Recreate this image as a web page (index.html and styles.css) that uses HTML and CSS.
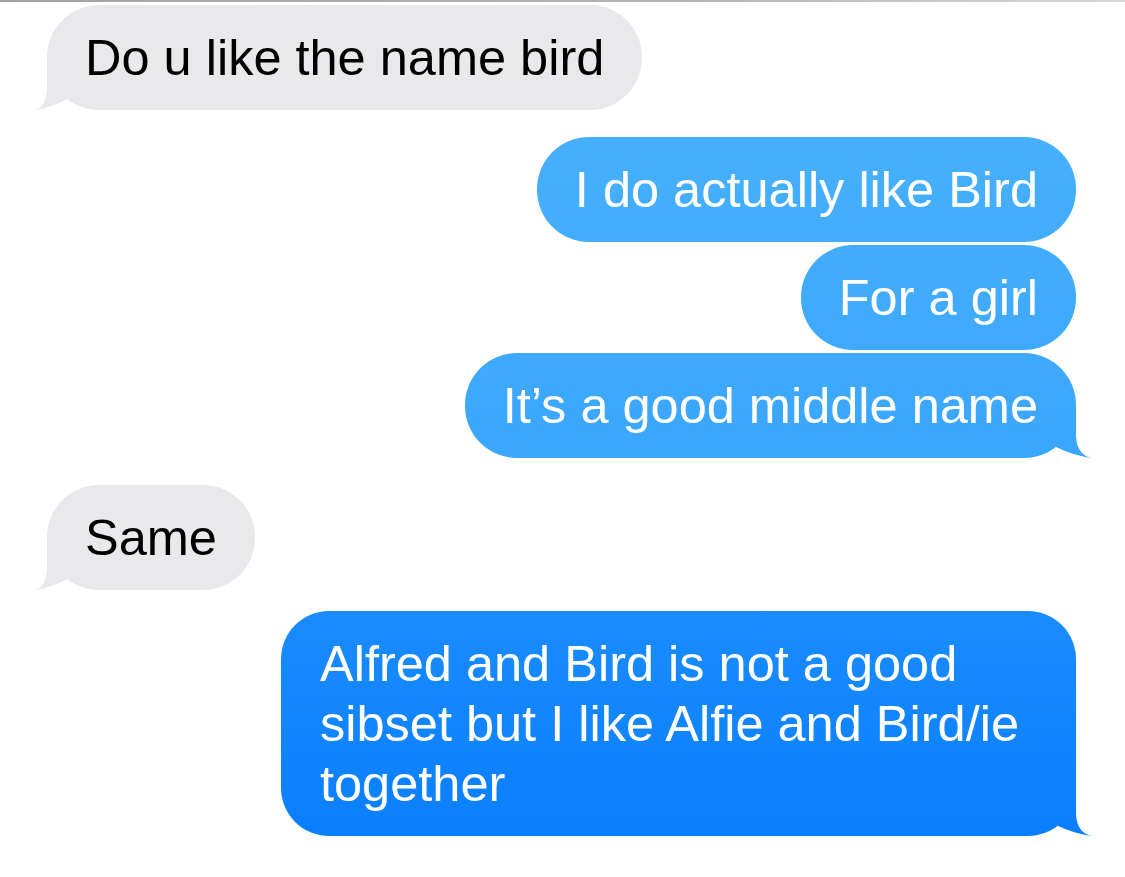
FILE: index.html
```html
<!DOCTYPE html>
<html lang="en">
<head>
  <meta charset="UTF-8">
  <meta name="viewport" content="width=device-width, initial-scale=1.0">
  <title>Messages</title>
  <link rel="stylesheet" href="styles.css">
</head>
<body>

  <div class="top-rule"></div>

  <div class="thread">
    <div class="group them">
      <div class="bubble tail">Do u like the name bird</div>
    </div>

    <div class="group me">
      <div class="bubble">I do actually like Bird</div>
      <div class="bubble">For a girl</div>
      <div class="bubble tail">It’s a good middle name</div>
    </div>

    <div class="group them">
      <div class="bubble tail">Same</div>
    </div>

    <div class="group me last">
      <div class="bubble tail wide">Alfred and Bird is not a good sibset but I like Alfie and Bird/ie together</div>
    </div>
  </div>

</body>
</html>
```

FILE: styles.css
```css
body {
  font-family: "Liberation Sans", Arial, sans-serif;
  margin: 0;
  background-color: #fff;
  overflow: hidden;
}

.top-rule {
  height: 2px;
  background: linear-gradient(to right, #a3a3a3, #b5b5b5 60%, #d6d6d6);
}

.thread {
  display: flex;
  flex-direction: column;
  gap: 27px;
  padding: 3px 49px 0 47px;
}

.group {
  display: flex;
  flex-direction: column;
  gap: 3px;
}

.group.them {
  align-items: flex-start;
}

.group.me {
  align-items: flex-end;
}

.group.last {
  margin-top: -6px;
}

.bubble {
  position: relative;
  z-index: 0;
  font-size: 50.5px;
  line-height: 60px;
  padding: 23px 38px 22px 38px;
  border-radius: 52px;
}

.them .bubble {
  background-color: #e9e9eb;
  color: #000;
}

/* sent bubbles share one gradient, pinned to the screen like iMessage */
.me .bubble,
.me .bubble.tail::before {
  background: linear-gradient(to bottom, #4cb4fb 0px, #43adfc 240px, #3aa6fd 460px, #1a8cff 612px, #0a7ffe 840px) fixed;
}

.me .bubble {
  color: #fff;
}

.bubble.wide {
  max-width: 718px;
  padding-left: 39px;
  border-radius: 48px;
}

/* tails: fill the bottom corner and curl out to a point */
.bubble.tail::before {
  content: "";
  position: absolute;
  z-index: -1;
  bottom: 0;
  height: 52px;
}

.them .bubble.tail::before {
  left: -13px;
  width: 43px;
  background: #e9e9eb;
  clip-path: path("M43 0 H13 V30 Q12 50 0 52 Q17 50 33 41 L43 36 Z");
}

.me .bubble.tail::before {
  right: -17px;
  width: 47px;
  clip-path: path("M0 0 H30 V30 Q31 50 47 52 Q28 50 10 41 L0 36 Z");
}
```
